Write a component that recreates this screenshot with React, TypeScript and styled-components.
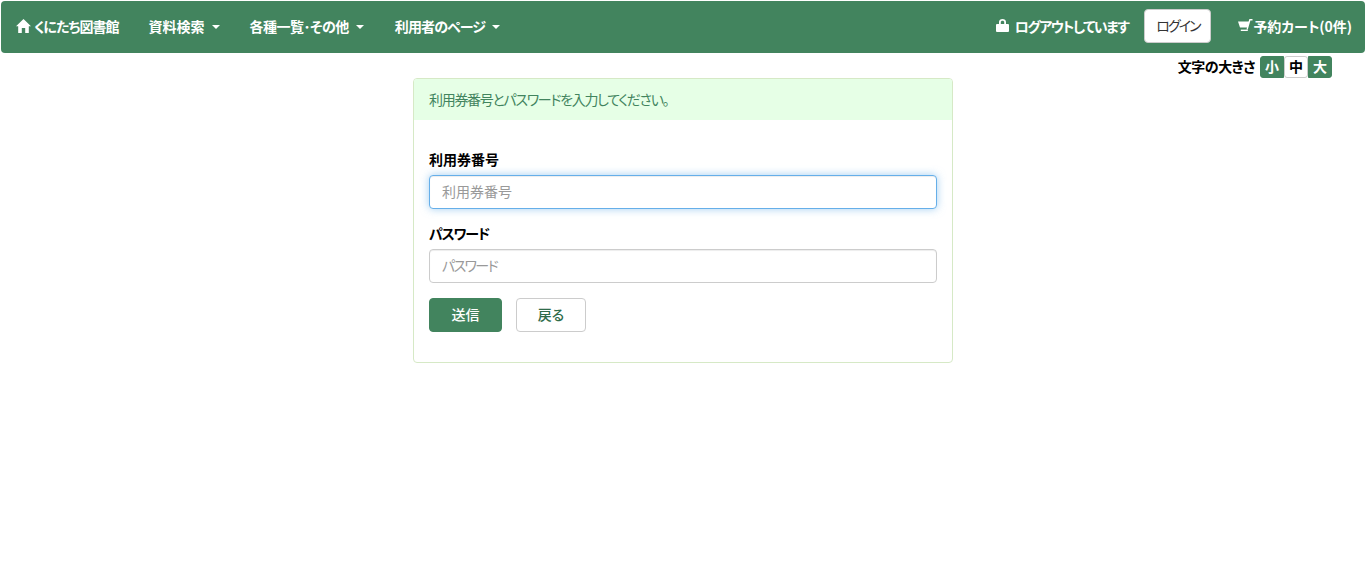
import React from "react";
import styled, { createGlobalStyle } from "styled-components";

const GlobalStyle = createGlobalStyle`
  html, body {
    margin: 0;
    padding: 0;
    background: #fff;
    font-family: "Noto Sans CJK JP", "Noto Sans", "Liberation Sans", sans-serif;
    font-size: 14px;
    color: #000;
    font-feature-settings: "palt";
  }
  * { box-sizing: border-box; }
  button, input { font-feature-settings: "palt"; }
`;

const Navbar = styled.nav`
  display: flex;
  justify-content: space-between;
  align-items: center;
  height: 52px;
  margin: 1px 1px 0;
  padding: 0 13px 0 15px;
  background-color: #42845e;
  border-radius: 4px;
  color: #fff;
  font-weight: 700;
  font-size: 14px;
  white-space: nowrap;
`;

const NavGroup = styled.div`
  display: flex;
  align-items: center;
`;

const NavItem = styled.a<{ $gap?: number; $tight?: number }>`
  display: flex;
  align-items: center;
  margin-right: ${(p) => p.$gap ?? 0}px;
  padding-bottom: 2px;
  line-height: 20px;
  letter-spacing: ${(p) => p.$tight ?? 0}px;
  cursor: pointer;
`;

const NavIcon = styled.svg<{ $gap?: number }>`
  width: 15px;
  height: 14px;
  margin-right: ${(p) => p.$gap ?? 3}px;
  fill: #fff;
  flex: none;
`;

const Caret = styled.span`
  width: 0;
  height: 0;
  margin-left: 7px;
  margin-top: 2px;
  border-top: 4px solid #fff;
  border-left: 4px solid transparent;
  border-right: 4px solid transparent;
`;

const LoginButton = styled.button`
  width: 67px;
  height: 34px;
  margin: 0 27px 2px 16px;
  padding: 0 0 2px;
  background: #fff;
  border: 1px solid #ccc;
  border-radius: 4px;
  color: #333;
  font: inherit;
  font-weight: 400;
  letter-spacing: -2px;
`;

const SizeRow = styled.div`
  display: flex;
  justify-content: flex-end;
  align-items: center;
  height: 22px;
  margin-top: 3px;
  padding-right: 34px;
`;

const SizeLabel = styled.span`
  margin-right: 5px;
  padding-bottom: 2px;
  font-size: 14px;
  font-weight: 700;
  letter-spacing: -0.5px;
`;

const SizeGroup = styled.div`
  display: flex;
`;

const SizeButton = styled.span<{ $active?: boolean }>`
  display: flex;
  align-items: center;
  justify-content: center;
  width: 24px;
  height: 22px;
  padding-bottom: 2px;
  font-size: 14px;
  font-weight: 700;
  background: ${(p) => (p.$active ? "#fff" : "#42845e")};
  color: ${(p) => (p.$active ? "#000" : "#fff")};
  border: 1px solid ${(p) => (p.$active ? "#ccc" : "#42845e")};
  border-radius: ${(p) => (p.$active ? "3px" : "0")};
  &:first-child { border-radius: 3px 0 0 3px; }
  &:last-child { border-radius: 0 3px 3px 0; }
`;

const Panel = styled.section`
  width: 540px;
  height: 285px;
  margin: 0 auto;
  border: 1px solid #d6e9c6;
  border-radius: 4px;
  overflow: hidden;
`;

const PanelHeading = styled.div`
  display: flex;
  align-items: center;
  height: 41px;
  padding: 0 15px 2px;
  background: #e6ffe6;
  color: #42845e;
  font-size: 14px;
  letter-spacing: -1.3px;
`;

const PanelBody = styled.form`
  padding: 29px 15px 15px;
`;

const Field = styled.div`
  margin-bottom: 14px;
`;

const Label = styled.label<{ $tight?: number }>`
  display: block;
  height: 20px;
  margin-bottom: 6px;
  font-size: 14px;
  font-weight: 700;
  line-height: 20px;
  letter-spacing: ${(p) => p.$tight ?? 0}px;
`;

const Input = styled.input<{ $focused?: boolean; $tight?: number }>`
  display: block;
  width: 100%;
  height: 34px;
  padding: 5px 12px 7px;
  background: #fff;
  border: 1px solid ${(p) => (p.$focused ? "#66afe9" : "#ccc")};
  border-radius: 4px;
  outline: none;
  font: inherit;
  font-size: 14px;
  color: #555;
  box-shadow: ${(p) =>
    p.$focused
      ? "inset 0 1px 1px rgba(0,0,0,.075), 0 0 8px rgba(102,175,233,.6)"
      : "inset 0 1px 1px rgba(0,0,0,.075)"};
  &::placeholder {
    color: #999;
    opacity: 1;
    letter-spacing: ${(p) => p.$tight ?? 0}px;
  }
`;

const Actions = styled.div`
  display: flex;
  gap: 14px;
  margin-top: 15px;
`;

const Button = styled.button<{ $primary?: boolean }>`
  width: ${(p) => (p.$primary ? 73 : 70)}px;
  height: 34px;
  padding: 0 0 2px;
  background: ${(p) => (p.$primary ? "#42845e" : "#fff")};
  border: 1px solid ${(p) => (p.$primary ? "#42845e" : "#ccc")};
  border-radius: 4px;
  color: ${(p) => (p.$primary ? "#fff" : "#2f6b4a")};
  font: inherit;
  font-size: 14px;
  font-weight: 500;
`;

const HomeIcon = () => (
  <NavIcon viewBox="0 0 15 14">
    <path d="M7.5 0 L15 7.2 L12.8 7.2 L12.8 14 L9.2 14 L9.2 9 L5.8 9 L5.8 14 L2.2 14 L2.2 7.2 L0 7.2 Z" />
  </NavIcon>
);

const LockIcon = () => (
  <NavIcon viewBox="0 0 15 14" $gap={4}>
    <path
      d="M0 6 Q0 5 1 5 H3 V3 C3 1 4.5 0 6.5 0 C8.5 0 10 1 10 3 V5 H12 Q13 5 13 6 V12 Q13 13 12 13 H1 Q0 13 0 12 Z M4.8 5 H8.2 V3.2 C8.2 2.2 7.5 1.7 6.5 1.7 C5.5 1.7 4.8 2.2 4.8 3.2 Z"
      fillRule="evenodd"
    />
  </NavIcon>
);

const CartIcon = () => (
  <NavIcon viewBox="0 0 15 14" $gap={0}>
    <path d="M0 2.5 H10.6 L11.4 0 H14.5 V1.4 H12.4 L9.8 10.4 H8.5 L9 8.6 H2 Z" />
    <path d="M2.8 10.6 H9.8 V12 H2.8 Z" />
  </NavIcon>
);

const App = () => {
  return (
    <>
      <GlobalStyle />
      <Navbar>
        <NavGroup>
          <NavItem $gap={30} $tight={-1}>
            <HomeIcon />
            くにたち図書館
          </NavItem>
          <NavItem $gap={30}>
            資料検索
            <Caret />
          </NavItem>
          <NavItem $gap={31} $tight={-0.5}>
            各種一覧･その他
            <Caret />
          </NavItem>
          <NavItem $tight={-0.9}>
            利用者のページ
            <Caret />
          </NavItem>
        </NavGroup>
        <NavGroup>
          <NavItem $tight={-1.5}>
            <LockIcon />
            ログアウトしています
          </NavItem>
          <LoginButton type="button">ログイン</LoginButton>
          <NavItem $tight={-0.05}>
            <CartIcon />
            予約カート(0件)
          </NavItem>
        </NavGroup>
      </Navbar>
      <SizeRow>
        <SizeLabel>文字の大きさ</SizeLabel>
        <SizeGroup>
          <SizeButton>小</SizeButton>
          <SizeButton $active>中</SizeButton>
          <SizeButton>大</SizeButton>
        </SizeGroup>
      </SizeRow>
      <Panel>
        <PanelHeading>利用券番号とパスワードを入力してください。</PanelHeading>
        <PanelBody>
          <Field>
            <Label>利用券番号</Label>
            <Input $focused placeholder="利用券番号" />
          </Field>
          <Field>
            <Label $tight={-1.2}>パスワード</Label>
            <Input type="password" $tight={-1.6} placeholder="パスワード" />
          </Field>
          <Actions>
            <Button type="button" $primary>
              送信
            </Button>
            <Button type="button">戻る</Button>
          </Actions>
        </PanelBody>
      </Panel>
    </>
  );
};

export default App;
